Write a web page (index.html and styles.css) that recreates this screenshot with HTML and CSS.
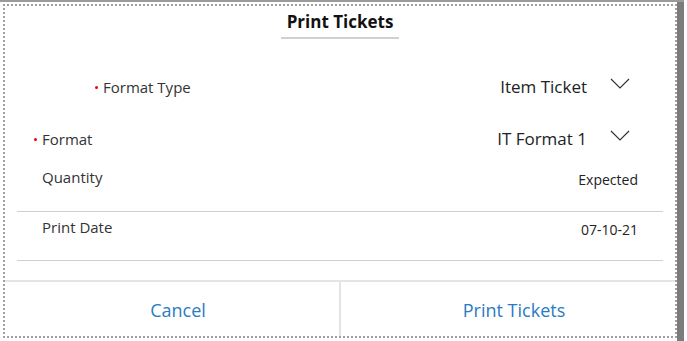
FILE: index.html
```html
<!DOCTYPE html>
<html lang="en">
<head>
    <meta charset="UTF-8">
    <meta name="viewport" content="width=device-width, initial-scale=1.0">
    <title>Print Tickets</title>
    <link rel="stylesheet" href="styles.css">
</head>
<body>

<div class="screen">
    <div class="dialog">
        <div class="header">
            <h2 class="title">Print Tickets</h2>
        </div>

        <div class="fields">
            <div class="row row-type">
                <span class="label indent"><span class="req"></span>Format Type</span>
                <span class="select">
                    Item Ticket
                    <svg class="chevron" width="20" height="11" viewBox="0 0 20 11"><path d="M1 1 L10 10 L19 1" fill="none" stroke="#333" stroke-width="1.2"/></svg>
                </span>
            </div>
            <div class="row row-format">
                <span class="label"><span class="req"></span>Format</span>
                <span class="select">
                    IT Format 1
                    <svg class="chevron" width="20" height="11" viewBox="0 0 20 11"><path d="M1 1 L10 10 L19 1" fill="none" stroke="#333" stroke-width="1.2"/></svg>
                </span>
            </div>
            <div class="row row-qty line">
                <span class="label">Quantity</span>
                <span class="value">Expected</span>
            </div>
            <div class="row row-date line">
                <span class="label">Print Date</span>
                <span class="value">07-10-21</span>
            </div>
        </div>

        <div class="footer">
            <button type="button">Cancel</button>
            <button type="button">Print Tickets</button>
        </div>
    </div>
    <div class="scrollbar"></div>
</div>

</body>
</html>
```

FILE: styles.css
```css
/* Estilos basicos */
body {
    margin: 0;
    font-family: "Open Sans", "Noto Sans", sans-serif;
    color: #222;
    background: #fff;
}
.screen {
    display: flex;
    width: 684px;
    height: 341px;
    border-top: 2px solid #9a9a9a;
    box-sizing: border-box;
    padding: 2px 0 3px 3px;
}
.dialog {
    width: 674px;
    height: 334px;
    box-sizing: border-box;
    border: 2px dotted #a0a0a0;
    display: flex;
    flex-direction: column;
}
.scrollbar {
    width: 7px;
    background: #7c7c7c;
    margin-top: -2px;
    margin-bottom: -3px;
}
.header {
    text-align: center;
    padding-top: 4px;
}
.title {
    display: inline-block;
    margin: 0;
    padding: 0 6px 3px;
    font-size: 17px;
    line-height: 24px;
    font-weight: 700;
    color: #111;
    border-bottom: 2px solid #d0d0d0;
}
.fields {
    margin: 23px 12px 0;
}
.row {
    display: flex;
    justify-content: space-between;
    align-items: center;
    padding: 0 25px;
}
.label {
    font-size: 15px;
    line-height: 22px;
    color: #333;
}
.label.indent {
    padding-left: 61px;
}
.req {
    display: inline-block;
    width: 3px;
    height: 3px;
    border-radius: 50%;
    background: #e00;
    margin-left: -8px;
    margin-right: 5px;
    vertical-align: 4px;
}
.select {
    display: flex;
    align-items: center;
    font-size: 17px;
    line-height: 24px;
    color: #222;
    margin-right: 8px;
}
.chevron {
    margin-left: 23px;
    margin-top: -8px;
}
.row-type {
    height: 50px;
}
.row-format {
    height: 54px;
}
.row-qty {
    height: 46px;
    align-items: flex-start;
}
.row-date {
    align-items: flex-start;
    padding-top: 4px;
}
.line {
    border-bottom: 1px solid #cfcfcf;
    box-sizing: border-box;
}
.row-date.line {
    height: 49px;
}
.value {
    font-size: 14px;
    line-height: 22px;
    padding-top: 3px;
    color: #222;
}
.footer {
    margin-top: auto;
    display: flex;
    border-top: 2px solid #e4e4e4;
    height: 54px;
}
.footer button {
    flex: 1;
    border: none;
    background: none;
    font-family: inherit;
    font-size: 18px;
    color: #2a7bc2;
    cursor: pointer;
    padding: 2px 0 0 12px;
}
.footer button + button {
    border-left: 2px solid #e4e4e4;
}
```
